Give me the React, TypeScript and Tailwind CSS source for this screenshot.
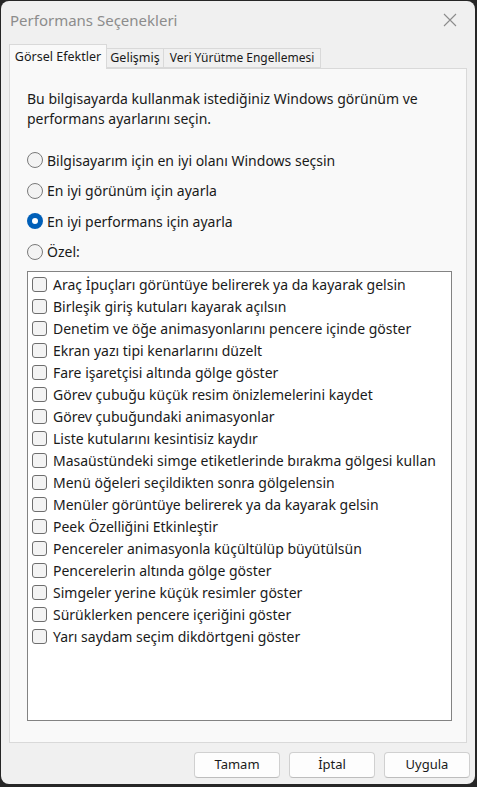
const FONT = "font-['Segoe_UI','Noto_Sans',sans-serif]";

const RADIOS = [
  { label: "Bilgisayarım için en iyi olanı Windows seçsin", checked: false },
  { label: "En iyi görünüm için ayarla", checked: false },
  { label: "En iyi performans için ayarla", checked: true },
  { label: "Özel:", checked: false },
];

const EFFECTS = [
  "Araç İpuçları görüntüye belirerek ya da kayarak gelsin",
  "Birleşik giriş kutuları kayarak açılsın",
  "Denetim ve öğe animasyonlarını pencere içinde göster",
  "Ekran yazı tipi kenarlarını düzelt",
  "Fare işaretçisi altında gölge göster",
  "Görev çubuğu küçük resim önizlemelerini kaydet",
  "Görev çubuğundaki animasyonlar",
  "Liste kutularını kesintisiz kaydır",
  "Masaüstündeki simge etiketlerinde bırakma gölgesi kullan",
  "Menü öğeleri seçildikten sonra gölgelensin",
  "Menüler görüntüye belirerek ya da kayarak gelsin",
  "Peek Özelliğini Etkinleştir",
  "Pencereler animasyonla küçültülüp büyütülsün",
  "Pencerelerin altında gölge göster",
  "Simgeler yerine küçük resimler göster",
  "Sürüklerken pencere içeriğini göster",
  "Yarı saydam seçim dikdörtgeni göster",
];

function Radio({ checked }: { checked: boolean }) {
  if (checked) {
    return (
      <span className="w-[16px] h-[16px] rounded-full bg-[#005fb8] flex items-center justify-center shrink-0">
        <span className="w-[6px] h-[6px] rounded-full bg-white" />
      </span>
    );
  }
  return <span className="w-[16px] h-[16px] rounded-full border border-[#7a7a7a] bg-[#f3f3f3] shrink-0" />;
}

export default function App() {
  return (
    <div className={`w-[477px] h-[787px] bg-[#262626] pt-[1px] pl-[1px] pr-[2px] pb-[3px] ${FONT}`}>
      <div className="h-full bg-[#f0f0f0] rounded-[8px] flex flex-col">
        {/* Title bar */}
        <div className="h-[38px] flex items-center justify-between pl-[9px] pr-[18px] shrink-0">
          <span className="text-[15px] text-[#8c8c8c]">Performans Seçenekleri</span>
          <svg width="14" height="14" viewBox="0 0 14 14" className="text-[#8c8c8c]">
            <path d="M1 1L13 13M13 1L1 13" stroke="currentColor" strokeWidth="1.1" />
          </svg>
        </div>

        {/* Tabs */}
        <div className="flex items-end pl-[8px] h-[29px] shrink-0">
          <div className="w-[98px] h-[25px] flex items-center justify-center bg-[#f9f9f9] border border-b-0 border-[#d9d9d9] text-[12.5px] text-[#1a1a1a] relative z-10 -mb-[1px] whitespace-nowrap">
            Görsel Efektler
          </div>
          <div className="w-[57px] h-[20px] flex items-center justify-center bg-[#f0f0f0] border border-l-0 border-[#d9d9d9] text-[12.5px] text-[#1a1a1a] whitespace-nowrap">
            Gelişmiş
          </div>
          <div className="w-[157px] h-[20px] flex items-center justify-center bg-[#f0f0f0] border border-l-0 border-[#d9d9d9] text-[12px] text-[#1a1a1a] whitespace-nowrap">
            Veri Yürütme Engellemesi
          </div>
        </div>

        {/* Tab panel */}
        <div className="mx-[8px] h-[675px] bg-[#f9f9f9] border border-[#d9d9d9] pl-[17px] pr-[14px] pt-[20px] flex flex-col shrink-0">
          <p className="text-[14px] leading-[20px] text-[#1a1a1a]">
            Bu bilgisayarda kullanmak istediğiniz Windows görünüm ve performans ayarlarını seçin.
          </p>

          <div className="mt-[21px] flex flex-col gap-[10.5px]">
            {RADIOS.map((r) => (
              <div key={r.label} className="flex items-center gap-[4px] h-[20px]">
                <Radio checked={r.checked} />
                <span className="text-[14px] text-[#1a1a1a]">{r.label}</span>
              </div>
            ))}
          </div>

          <div className="mt-[9px] h-[450px] bg-white border border-[#838383] pl-[4px] pt-[2px] flex flex-col">
            {EFFECTS.map((e) => (
              <div key={e} className="flex items-center gap-[6px] h-[22px]">
                <span className="w-[15px] h-[15px] rounded-[3px] border border-[#6e6e6e] bg-[#f3f3f3] shrink-0" />
                <span className="text-[14px] text-[#1a1a1a] whitespace-nowrap">{e}</span>
              </div>
            ))}
          </div>
        </div>

        {/* Buttons */}
        <div className="flex justify-end gap-[9px] pr-[5px] pt-[9px]">
          {["Tamam", "İptal", "Uygula"].map((b) => (
            <button
              key={b}
              className="w-[86px] h-[26px] rounded-[4px] bg-[#fdfdfd] border border-[#d0d0d0] border-b-[#bdbdbd] text-[13px] text-[#1a1a1a]"
            >
              {b}
            </button>
          ))}
        </div>
      </div>
    </div>
  );
}
